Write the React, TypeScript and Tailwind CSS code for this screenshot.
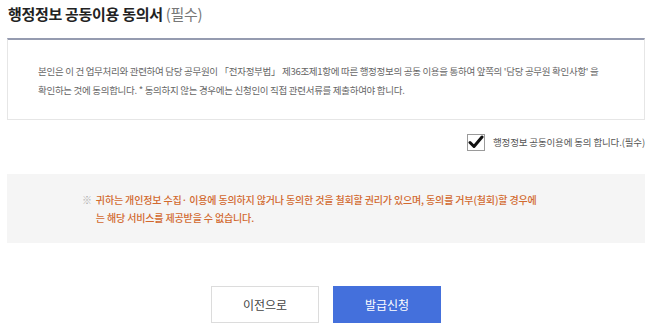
export default function App() {
  const font = { fontFamily: '"Noto Sans CJK KR", "Noto Sans", sans-serif' };
  return (
    <div className="w-[649px] h-[329px] bg-white pl-[7px] pr-[4px] overflow-hidden" style={font}>
      {/* title */}
      <h2 className="h-[38px] pt-[3px] pl-[1px] text-[15px] font-bold text-[#222] tracking-[-0.3px] leading-[22px]">
        행정정보 공동이용 동의서 <span className="font-normal text-[#777]">(필수)</span>
      </h2>

      {/* agreement text box */}
      <div className="h-[82px] border-t-2 border-t-[#959bb0] border-x border-b border-[#e6e6e6] flex items-center pl-[30px] pt-[2px]">
        <p className="text-[9.5px] leading-[19px] text-[#666] tracking-[-0.3px] whitespace-nowrap">
          본인은 이 건 업무처리와 관련하여 담당 공무원이 「전자정부법」 제36조제1항에 따른 행정정보의 공동 이용을 통하여 앞쪽의 '담당 공무원 확인사항' 을
          <br />
          확인하는 것에 동의합니다. * 동의하지 않는 경우에는 신청인이 직접 관련서류를 제출하여야 합니다.
        </p>
      </div>

      {/* checkbox */}
      <div className="flex justify-end items-center gap-[8px] mt-[14px] h-[16px]">
        <span className="w-[18px] h-[17px] border border-[#9a9a9a] bg-white flex items-center justify-center">
          <svg width="16" height="14" viewBox="0 0 16 14">
            <path d="M2 7.5 L6 11.5 L14 2" fill="none" stroke="#111" strokeWidth="3" strokeLinecap="round" strokeLinejoin="round" />
          </svg>
        </span>
        <span className="text-[9.5px] text-[#555] tracking-[-0.15px]">행정정보 공동이용에 동의 합니다.(필수)</span>
      </div>

      {/* notice */}
      <div className="mt-[24px] h-[69px] bg-[#f5f5f5] flex items-center pl-[75px]">
        <div className="flex gap-[4px] text-[10px] leading-[18px] tracking-[-0.15px] font-medium whitespace-nowrap">
          <span className="text-[#aaa]">※</span>
          <p className="text-[#d2692f]">
            귀하는 개인정보 수집· 이용에 동의하지 않거나 동의한 것을 철회할 권리가 있으며, 동의를 거부(철회)할 경우에
            <br />
            는 해당 서비스를 제공받을 수 없습니다.
          </p>
        </div>
      </div>

      {/* buttons */}
      <div className="flex justify-center gap-[14px] mt-[43px]">
        <button className="w-[108px] h-[37px] border border-[#dcdcdc] bg-white text-[12px] text-[#444]">이전으로</button>
        <button className="w-[108px] h-[37px] bg-[#4470dc] text-[12px] text-white">발급신청</button>
      </div>
    </div>
  );
}
